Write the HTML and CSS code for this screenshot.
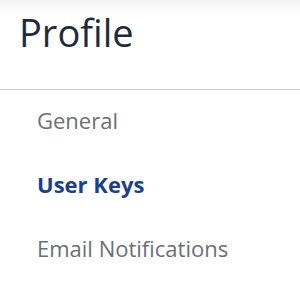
FILE: index.html
```html
<!DOCTYPE html>
<html>
<head>
<meta charset="utf-8">
<link rel="stylesheet" href="styles.css">
</head>
<body>
<header class="header">
  <h1 class="title">Profile</h1>
</header>
<nav class="menu">
  <a class="item">General</a>
  <a class="item active">User Keys</a>
  <a class="item">Email Notifications</a>
</nav>
</body>
</html>
```
FILE: styles.css
```css
html, body {
  margin: 0;
  padding: 0;
  background: #ffffff;
  font-family: "Open Sans", sans-serif;
}
.header {
  background: linear-gradient(to bottom, #f3f3f3 0px, #ffffff 14px);
  padding: 6px 0 31px 19px;
  border-bottom: 1px solid #cfcfcf;
}
.title {
  margin: 0;
  font-size: 38px;
  font-weight: 400;
  line-height: normal;
  color: #1f2b3c;
}
.menu {
  display: flex;
  flex-direction: column;
  padding-left: 37px;
}
.item {
  font-size: 22px;
  line-height: 30px;
  padding: 15px 0 19px;
  color: #6b7078;
  text-decoration: none;
}
.item.active {
  font-weight: 700;
  color: #1a3f8c;
}
```
